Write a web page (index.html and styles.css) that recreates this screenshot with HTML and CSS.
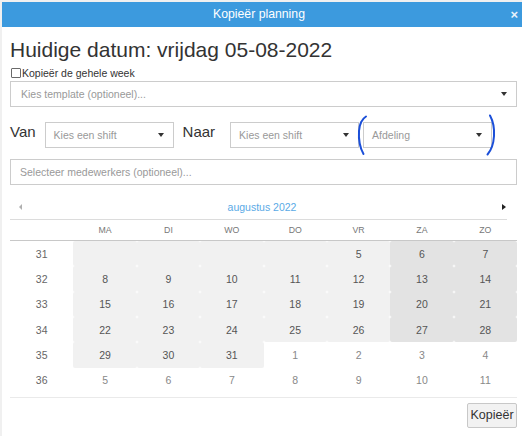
FILE: index.html
```html
<!DOCTYPE html>
<html>
<head>
<meta charset="utf-8">
<link rel="stylesheet" href="styles.css">
</head>
<body>
<div class="dialog">
  <div class="titlebar">
    <span class="titlebar-text">Kopieër planning</span>
    <span class="close">×</span>
  </div>
  <div class="content">
    <h1 class="date">Huidige datum: vrijdag 05-08-2022</h1>
    <label class="check"><input type="checkbox" class="checkbox"><span>Kopieër de gehele week</span></label>
    <div class="select wide"><span class="placeholder">Kies template (optioneel)...</span><span class="caret"></span></div>
    <div class="shift-row">
      <span class="row-label van">Van</span>
      <div class="select shift"><span class="placeholder">Kies een shift</span><span class="caret"></span></div>
      <span class="row-label naar">Naar</span>
      <div class="select shift"><span class="placeholder">Kies een shift</span><span class="caret"></span></div>
      <div class="select shift dept"><span class="placeholder">Afdeling</span><span class="caret"></span></div>
    </div>
    <div class="select wide multi"><span class="placeholder">Selecteer medewerkers (optioneel)...</span></div>
    <div class="cal-nav"><span class="nav-prev"></span><span class="month">augustus 2022</span><span class="nav-next"></span></div>
    <table class="cal">
      <thead>
        <tr><th></th><th>MA</th><th>DI</th><th>WO</th><th>DO</th><th>VR</th><th>ZA</th><th>ZO</th></tr>
      </thead>
      <tbody>
        <tr><td class="wk">31</td><td class="day"></td><td class="day"></td><td class="day"></td><td class="day"></td><td class="day">5</td><td class="day we">6</td><td class="day we">7</td></tr>
        <tr><td class="wk">32</td><td class="day">8</td><td class="day">9</td><td class="day">10</td><td class="day">11</td><td class="day">12</td><td class="day we">13</td><td class="day we">14</td></tr>
        <tr><td class="wk">33</td><td class="day">15</td><td class="day">16</td><td class="day">17</td><td class="day">18</td><td class="day">19</td><td class="day we">20</td><td class="day we">21</td></tr>
        <tr><td class="wk">34</td><td class="day">22</td><td class="day">23</td><td class="day">24</td><td class="day">25</td><td class="day">26</td><td class="day we">27</td><td class="day we">28</td></tr>
        <tr><td class="wk">35</td><td class="day">29</td><td class="day">30</td><td class="day">31</td><td class="other">1</td><td class="other">2</td><td class="other">3</td><td class="other">4</td></tr>
        <tr><td class="wk">36</td><td class="other">5</td><td class="other">6</td><td class="other">7</td><td class="other">8</td><td class="other">9</td><td class="other">10</td><td class="other">11</td></tr>
      </tbody>
    </table>
    <div class="footer"><button class="btn">Kopieër</button></div>
  </div>
</div>
<svg class="annot" width="522" height="436" viewBox="0 0 522 436">
  <path d="M366 116.5 C362 119, 359.5 124, 359 131 C358.5 139, 359.5 147, 363.5 154" fill="none" stroke="#1b4fd8" stroke-width="2" stroke-linecap="round"/>
  <path d="M490 115.5 C493 121, 494.5 128, 494 136 C493.5 144, 491.5 150, 487.5 154.5" fill="none" stroke="#1b4fd8" stroke-width="2" stroke-linecap="round"/>
</svg>
</body>
</html>
```
FILE: styles.css
```css
html, body {
  margin: 0;
  padding: 0;
}
body {
  position: relative;
  width: 522px;
  height: 436px;
  overflow: hidden;
  background: #f0f0f0;
  font-family: "Liberation Sans", Arial, sans-serif;
  color: #333;
  padding-top: 2px;
  box-sizing: border-box;
}
.dialog {
  margin-left: 2px;
  width: 520px;
  height: 434px;
  background: #fff;
}
.titlebar {
  position: relative;
  height: 25px;
  background: #3c9ade;
  color: #fff;
  font-size: 12.25px;
  line-height: 25px;
  text-align: center;
  padding-right: 6px;
}
.close {
  position: absolute;
  right: 4px;
  top: 0;
  font-size: 13px;
  font-weight: bold;
  line-height: 25px;
  color: #e8f2fb;
}
.content {
  padding: 0 5px 0 8px;
}
.date {
  margin: 11px 0 0 0;
  font-size: 21px;
  line-height: 24px;
  font-weight: normal;
  color: #333;
}
.check {
  display: flex;
  align-items: center;
  height: 12px;
  margin-top: 5px;
  font-size: 10.5px;
  color: #333;
}
.checkbox {
  appearance: none;
  -webkit-appearance: none;
  width: 10px;
  height: 10px;
  margin: 0 1px 0 1px;
  border: 1px solid #6a6a6a;
  border-radius: 1px;
  background: #fff;
  box-sizing: border-box;
}
.select {
  box-sizing: border-box;
  height: 26px;
  border: 1px solid #ccc;
  display: flex;
  align-items: center;
  justify-content: space-between;
  padding: 0 9px 0 10px;
  font-size: 10.5px;
  background: #fff;
}
.wide {
  margin-top: 2px;
}
.placeholder {
  color: #999;
}
.caret {
  width: 0;
  height: 0;
  border-top: 4px solid #333;
  border-left: 3px solid transparent;
  border-right: 3px solid transparent;
}
.shift-row {
  display: flex;
  align-items: flex-start;
  margin-top: 15px;
  height: 26px;
}
.row-label {
  font-size: 15px;
  line-height: 18px;
  margin-top: 1px;
  color: #333;
}
.van {
  margin-right: 9px;
}
.naar {
  margin-left: 9px;
  margin-right: 15px;
}
.shift {
  width: 129px;
  padding: 0 9px 0 8px;
}
.dept {
  margin-left: 4px;
}
.multi {
  margin-top: 11px;
  padding-left: 9px;
}
.cal-nav {
  box-sizing: border-box;
  width: 497px;
  height: 25px;
  margin-top: 10px;
  border-bottom: 1px solid #dcdcdc;
  display: flex;
  align-items: center;
  justify-content: space-between;
  padding: 0 1px 0 9px;
}
.month {
  color: #5aaae6;
  font-size: 10.5px;
}
.nav-prev {
  width: 0;
  height: 0;
  border-right: 3px solid #b0b0b0;
  border-top: 3px solid transparent;
  border-bottom: 3px solid transparent;
}
.nav-next {
  width: 0;
  height: 0;
  border-left: 4px solid #222;
  border-top: 3px solid transparent;
  border-bottom: 3px solid transparent;
}
.cal {
  width: 507px;
  table-layout: fixed;
  border-collapse: separate;
  border-spacing: 0;
}
.cal th {
  height: 20px;
  padding: 0;
  font-size: 8.75px;
  font-weight: normal;
  color: #777;
  border-bottom: 1px solid #c8c8c8;
  text-align: center;
}
.cal td {
  height: 25.33px;
  padding: 0;
  text-align: center;
  font-size: 10.5px;
  font-weight: normal;
}
.wk {
  color: #666;
}
.day {
  background: #f1f1f1;
  border-radius: 2px;
  color: #555;
}
.day.we {
  background: #e3e3e3;
}
.other {
  color: #888;
}
.footer {
  margin-top: 4px;
  border-top: 1px solid #eaeaea;
  padding-top: 5px;
  display: flex;
  justify-content: flex-end;
}
.btn {
  width: 50px;
  height: 25px;
  padding: 0;
  margin: 0;
  border: 1px solid #c8c8c8;
  border-radius: 2px;
  background: #f2f2f2;
  color: #333;
  font-family: "Liberation Sans", Arial, sans-serif;
  font-size: 12.5px;
}
.annot {
  position: absolute;
  left: 0;
  top: 0;
  pointer-events: none;
}
```
